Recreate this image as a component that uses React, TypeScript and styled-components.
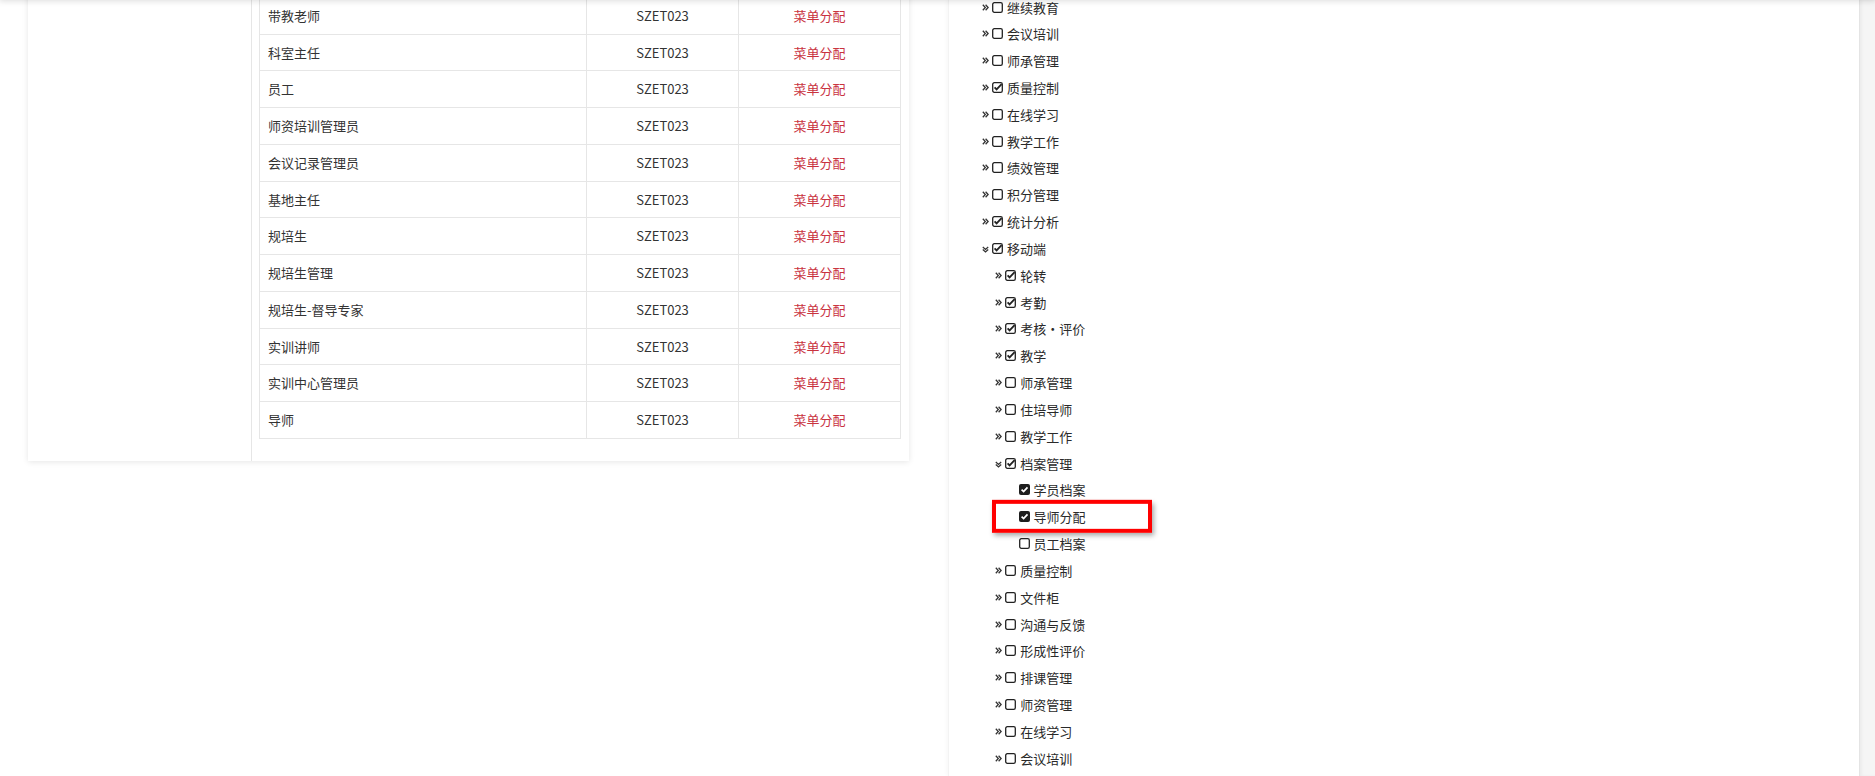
import styled, { createGlobalStyle } from "styled-components";

interface RoleRow {
    name: string;
    code: string;
}

interface TreeNode {
    label: string;
    level: number;
    checked: boolean;
    leaf?: boolean;
    open?: boolean;
    marked?: boolean;
}

const GlobalStyle = createGlobalStyle`
    html, body {
        margin: 0;
        padding: 0;
        height: 100%;
        overflow: hidden;
        background: #fff;
    }
    body {
        font-family: "Microsoft YaHei", "Noto Sans CJK SC", "Noto Sans", sans-serif;
        font-size: 13px;
        color: #333;
    }
`;

const Page = styled.div`
    position: relative;
    display: flex;
    align-items: flex-start;
    height: 776px;
    overflow: hidden;
`;

// shadow of the fixed header sitting just above the viewport
const HeaderShadow = styled.div`
    position: absolute;
    left: 0;
    right: 0;
    top: -10px;
    height: 10px;
    box-shadow: 0 0 6px 1px rgba(0, 0, 0, 0.14);
    z-index: 5;
`;

const Card = styled.div`
    display: flex;
    margin: -11px 0 0 28px;
    width: 881px;
    background: #fff;
    box-shadow: 0 1px 6px rgba(0, 0, 0, 0.1);
`;

const SidePane = styled.div`
    width: 224px;
    border-right: 1px solid #e6e6e6;
`;

const TablePane = styled.div`
    padding: 8px 8px 22px 7px;
`;

const RoleTable = styled.table`
    width: 641px;
    border-collapse: collapse;
    table-layout: fixed;
`;

const Td = styled.td<{ $align?: string; $red?: boolean }>`
    border: 1px solid #e6e6e6;
    padding: 8px;
    line-height: 19.73px;
    text-align: ${(p) => p.$align || "left"};
    color: ${(p) => (p.$red ? "#c9333f" : "#333")};
    white-space: nowrap;
`;

const RightPanel = styled.div`
    flex: 1;
    display: flex;
    margin-left: 39px;
    height: 776px;
    border-left: 1px solid #f3f3f3;
    box-shadow: -1px 0 4px rgba(0, 0, 0, 0.04);
`;

const Tree = styled.ul`
    flex: 1;
    list-style: none;
    margin: -6.4px 0 0;
    padding: 0 0 0 33px;
`;

const Row = styled.li<{ $level: number }>`
    position: relative;
    display: flex;
    align-items: center;
    height: 26.84px;
    padding-left: ${(p) => (p.$level - 1) * 13.3}px;
    white-space: nowrap;
    color: #2a2a2a;
`;

const Switch = styled.span`
    display: inline-flex;
    align-items: center;
    width: 10px;
    height: 10px;
`;

const Check = styled.span`
    display: inline-flex;
    margin-right: 4px;
`;

const Highlight = styled.div`
    position: absolute;
    left: 10px;
    top: 50%;
    transform: translateY(-52%);
    width: 160px;
    height: 33px;
    box-sizing: border-box;
    border: 4px solid #ff0000;
    box-shadow: 2px 3px 5px rgba(0, 0, 0, 0.35);
    pointer-events: none;
`;

const ScrollTrack = styled.div`
    width: 15px;
    background: #f5f5f5;
    border-left: 1px solid #e4e4e4;
    box-shadow: inset 2px 0 3px rgba(0, 0, 0, 0.04);
`;

const roles: RoleRow[] = [
    "带教老师", "科室主任", "员工", "师资培训管理员", "会议记录管理员", "基地主任",
    "规培生", "规培生管理", "规培生-督导专家", "实训讲师", "实训中心管理员", "导师",
].map((name) => ({ name, code: "SZET023" }));

const n = (label: string, level: number, checked = false, extra: Partial<TreeNode> = {}): TreeNode =>
    ({ label, level, checked, ...extra });

const nodes: TreeNode[] = [
    n("继续教育", 1), n("会议培训", 1), n("师承管理", 1), n("质量控制", 1, true),
    n("在线学习", 1), n("教学工作", 1), n("绩效管理", 1), n("积分管理", 1),
    n("统计分析", 1, true), n("移动端", 1, true, { open: true }),
    n("轮转", 2, true), n("考勤", 2, true), n("考核·评价", 2, true), n("教学", 2, true),
    n("师承管理", 2), n("住培导师", 2), n("教学工作", 2), n("档案管理", 2, true, { open: true }),
    n("学员档案", 3, true, { leaf: true }), n("导师分配", 3, true, { leaf: true, marked: true }),
    n("员工档案", 3, false, { leaf: true }),
    n("质量控制", 2), n("文件柜", 2), n("沟通与反馈", 2), n("形成性评价", 2),
    n("排课管理", 2), n("师资管理", 2), n("在线学习", 2), n("会议培训", 2),
];

function Arrow({ open }: { open?: boolean }) {
    const d = open
        ? "M0.8 1 L3.5 3.4 L6.2 1 M0.8 3.6 L3.5 6 L6.2 3.6"
        : "M0.8 0.8 L3.3 3.5 L0.8 6.2 M3.6 0.8 L6.1 3.5 L3.6 6.2";
    return (
        <svg width="7" height="7" viewBox="0 0 7 7" style={{ marginTop: open ? 2 : 0 }}>
            <path d={d} fill="none" stroke="#333" strokeWidth="1.3" />
        </svg>
    );
}

function Box({ checked, leaf }: { checked: boolean; leaf?: boolean }) {
    if (checked && leaf) {
        return (
            <svg width="11" height="11" viewBox="0 0 11 11">
                <rect x="0" y="0" width="11" height="11" rx="2" fill="#1e1e1e" />
                <path d="M2.6 5.6 L4.6 7.6 L8.5 3.4" fill="none" stroke="#fff" strokeWidth="1.7" />
            </svg>
        );
    }
    return (
        <svg width="11" height="11" viewBox="0 0 11 11">
            <rect x="0.7" y="0.7" width="9.6" height="9.6" rx="1.6" fill="none" stroke="#222" strokeWidth="1.3" />
            {checked && <path d="M2.6 5.3 L4.6 7.4 L9.6 2.2" fill="none" stroke="#222" strokeWidth="1.8" />}
        </svg>
    );
}

export default function App() {
    return (
        <Page>
            <GlobalStyle />
            <HeaderShadow />
            <Card>
                <SidePane />
                <TablePane>
                    <RoleTable>
                        <colgroup>
                            <col style={{ width: 327 }} />
                            <col style={{ width: 152 }} />
                            <col style={{ width: 162 }} />
                        </colgroup>
                        <tbody>
                            {roles.map((r, i) => (
                                <tr key={i}>
                                    <Td>{r.name}</Td>
                                    <Td $align="center">{r.code}</Td>
                                    <Td $align="center" $red>菜单分配</Td>
                                </tr>
                            ))}
                        </tbody>
                    </RoleTable>
                </TablePane>
            </Card>

            <RightPanel>
                <Tree>
                    {nodes.map((node, i) => (
                        <Row key={i} $level={node.level}>
                            <Switch>{!node.leaf && <Arrow open={node.open} />}</Switch>
                            <Check><Box checked={node.checked} leaf={node.leaf} /></Check>
                            <span>{node.label}</span>
                            {node.marked && <Highlight />}
                        </Row>
                    ))}
                </Tree>
                <ScrollTrack />
            </RightPanel>
        </Page>
    );
}
